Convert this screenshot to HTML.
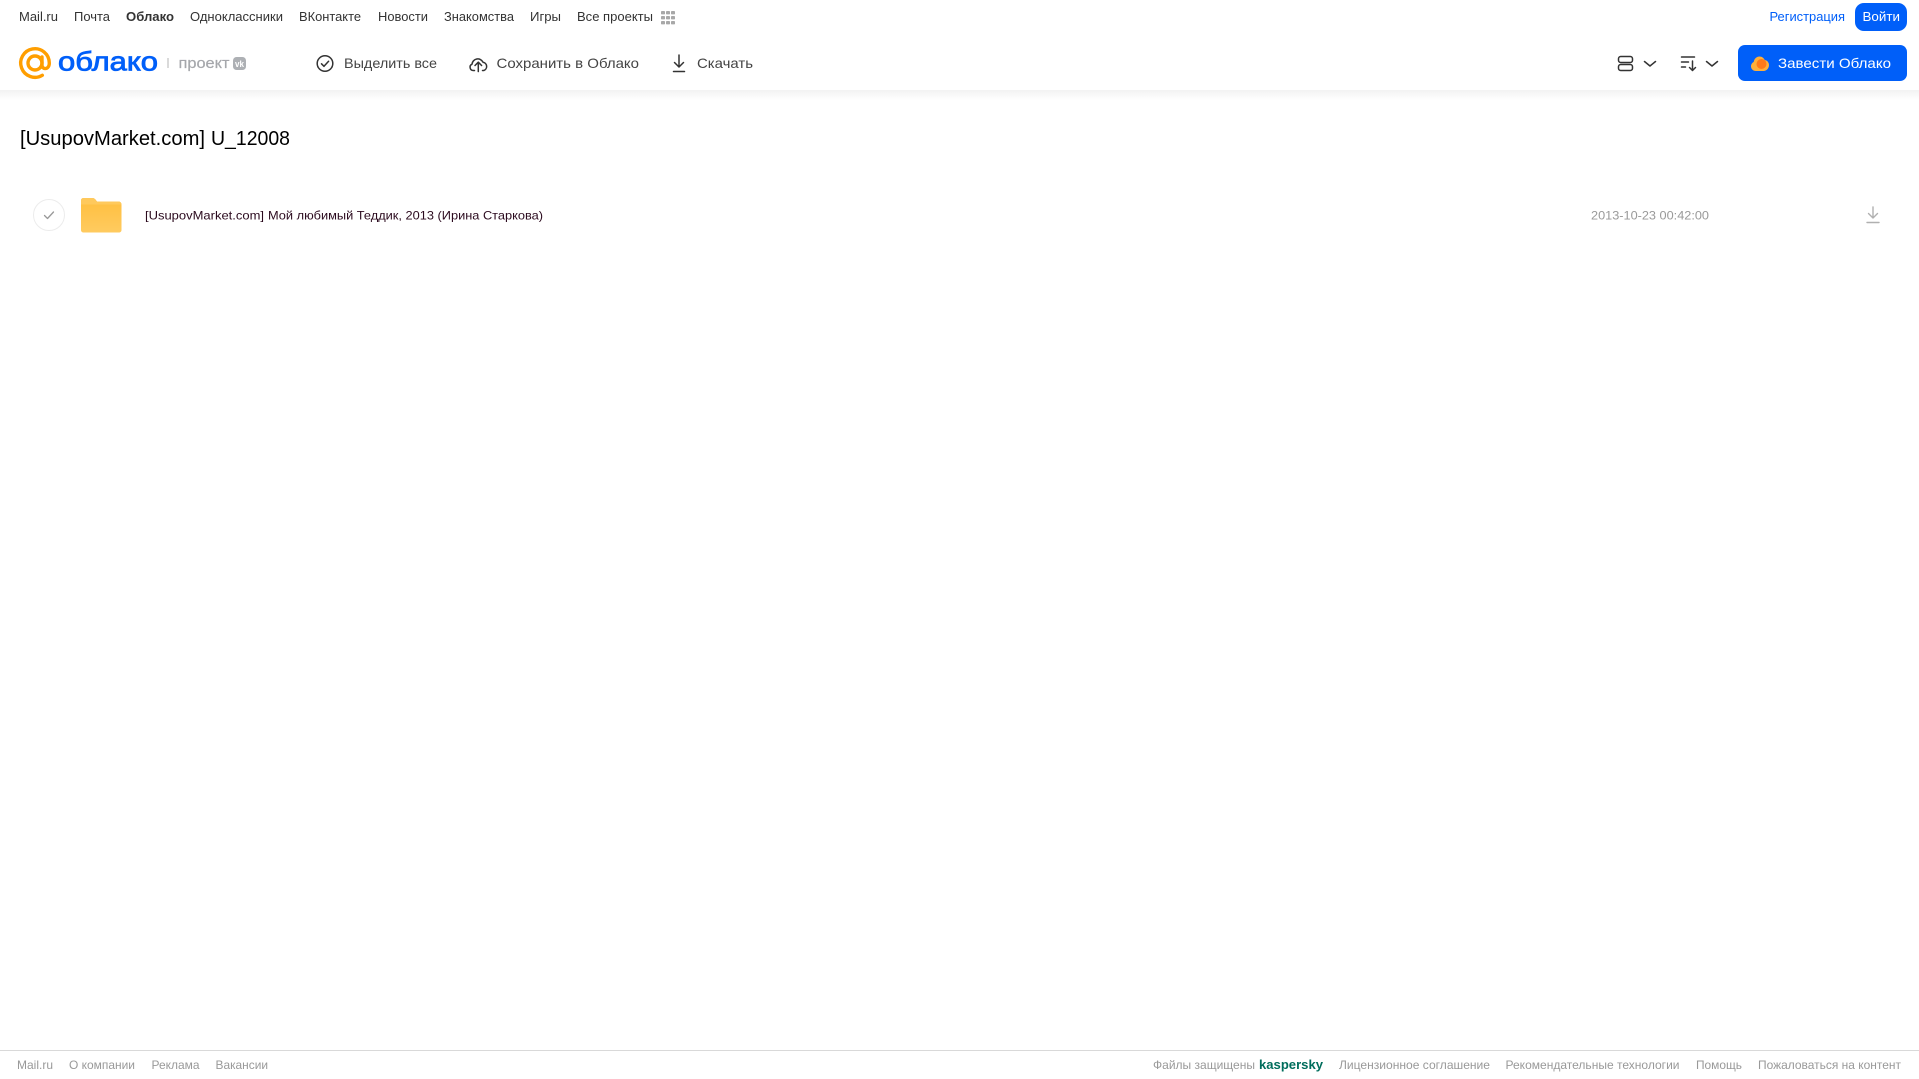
<!DOCTYPE html>
<html lang="ru"><head><meta charset="utf-8"><title>Облако</title>
<style>
html,body{margin:0;padding:0;background:#fff;width:1919px;height:1079px;overflow:hidden}
svg{display:block;position:absolute;left:0;top:0}
text{font-family:"Liberation Sans",Arial,sans-serif}
.n{font-size:13px;fill:#333}
.t{font-size:14px;fill:#444}
.f{font-size:12px;fill:#999}
</style></head><body>
<svg width="1919" height="1079" viewBox="0 0 1919 1079" xmlns="http://www.w3.org/2000/svg">
<defs>
<linearGradient id="sh" x1="0" y1="0" x2="0" y2="1"><stop offset="0" stop-color="#f2f2f2"/><stop offset="1" stop-color="#fff"/></linearGradient>
<linearGradient id="fo" x1="0" y1="0" x2="0" y2="1"><stop offset="0" stop-color="#ffbe3d"/><stop offset="1" stop-color="#ffcb60"/></linearGradient>
</defs>
<rect x="0" y="90" width="1919" height="10" fill="url(#sh)"/>

<text class="n" x="19" y="21" textLength="39" lengthAdjust="spacingAndGlyphs">Mail.ru</text>
<text class="n" x="74" y="21" textLength="36" lengthAdjust="spacingAndGlyphs">Почта</text>
<text class="n" x="126" y="21" textLength="48" lengthAdjust="spacingAndGlyphs" font-weight="bold">Облако</text>
<text class="n" x="190" y="21" textLength="93" lengthAdjust="spacingAndGlyphs">Одноклассники</text>
<text class="n" x="299" y="21" textLength="62" lengthAdjust="spacingAndGlyphs">ВКонтакте</text>
<text class="n" x="378" y="21" textLength="50" lengthAdjust="spacingAndGlyphs">Новости</text>
<text class="n" x="444" y="21" textLength="70" lengthAdjust="spacingAndGlyphs">Знакомства</text>
<text class="n" x="530" y="21" textLength="31" lengthAdjust="spacingAndGlyphs">Игры</text>
<text class="n" x="577" y="21" textLength="76" lengthAdjust="spacingAndGlyphs">Все проекты</text>
<g fill="#a8a8a8">
<rect x="661" y="11" width="4" height="3.4" rx=".8"/><rect x="666" y="11" width="4" height="3.4" rx=".8"/><rect x="671" y="11" width="4" height="3.4" rx=".8"/>
<rect x="661" y="16" width="4" height="3.4" rx=".8"/><rect x="666" y="16" width="4" height="3.4" rx=".8"/><rect x="671" y="16" width="4" height="3.4" rx=".8"/>
<rect x="661" y="21" width="4" height="3.4" rx=".8"/><rect x="666" y="21" width="4" height="3.4" rx=".8"/><rect x="671" y="21" width="4" height="3.4" rx=".8"/>
</g>

<!-- logo -->
<g fill="none" stroke="#ff9e00" stroke-width="3.4" stroke-linecap="round">
<circle cx="35" cy="63" r="7"/>
<path d="M42 57v8c0 5 7.300 5 7.300-2a14.300 14.300 0 1 0-7 12.300"/>
</g>
<text x="58" y="70.500" font-size="26.500" fill="#005ff9" stroke="#005ff9" stroke-width=".8" textLength="100" lengthAdjust="spacingAndGlyphs">облако</text>
<rect x="167.500" y="58" width="1" height="10" fill="#b5b5b5"/>
<text x="178.500" y="68" font-size="15" fill="#a5a7ab" stroke="#a5a7ab" stroke-width=".2" textLength="51" lengthAdjust="spacingAndGlyphs">проект</text>
<rect x="233" y="57" width="13" height="13" rx="3.500" fill="#adb0b4"/>
<text x="235" y="67" font-size="9" font-weight="bold" fill="#fff" textLength="9" lengthAdjust="spacingAndGlyphs">vk</text>

<!-- toolbar -->
<g fill="none" stroke="#333" stroke-width="1.500" stroke-linecap="round" stroke-linejoin="round">
<circle cx="325" cy="63.500" r="7.800"/>
<path d="M321.500 63.800l2.500 2.500 4.600-5"/>
<path d="M474.500 70.500h-1.200a3.300 3.300 0 0 1-1.300-6.300 5.800 5.800 0 0 1 11-2 4.300 4.300 0 0 1 .8 8.300h-1.300"/>
<path d="M478.300 71.500v-9M475 65.500l3.300-3.300 3.300 3.300"/>
<path d="M679 55v12M674.500 62.500l4.500 4.500 4.500-4.500M673.500 71.500h11"/>
</g>
<text class="t" x="344" y="68" textLength="93" lengthAdjust="spacingAndGlyphs">Выделить все</text>
<text class="t" x="496.500" y="68" textLength="142.500" lengthAdjust="spacingAndGlyphs">Сохранить в Облако</text>
<text class="t" x="697" y="68" textLength="56" lengthAdjust="spacingAndGlyphs">Скачать</text>

<!-- right side -->
<text x="1769.500" y="21" font-size="13" fill="#005ff9" textLength="75.500" lengthAdjust="spacingAndGlyphs">Регистрация</text>
<rect x="1855" y="3" width="52" height="28" rx="9" fill="#005ff9"/>
<text x="1862.500" y="21" font-size="13" fill="#fff" textLength="37.500" lengthAdjust="spacingAndGlyphs">Войти</text>

<g fill="none" stroke="#333" stroke-width="1.500" stroke-linecap="round" stroke-linejoin="round">
<rect x="1618.500" y="56.500" width="14" height="6" rx="2.200"/>
<rect x="1618.500" y="64.500" width="14" height="6" rx="2.200"/>
<path d="M1644.500 61.500l5.500 4.500 5.500-4.500"/>
<path d="M1706.500 61.500l5.500 4.500 5.500-4.500"/>
<path d="M1681.500 57h13M1681.500 62h7M1681.500 67h4"/>
<path d="M1692.500 61v9.500M1689.500 67.500l3 3 3-3"/>
</g>

<rect x="1738" y="45" width="169" height="36" rx="7" fill="#005ff9"/>
<path d="M1756 71c-3.200 0-5-2.200-5-4.700 0-2.100 1.300-3.700 2.700-4.300.5-3.300 3-5.500 5.800-5.500 2.400 0 4.300 1.400 5.200 3.500 2.400.3 4.300 2.400 4.300 5 0 3.400-2.500 6-5.500 6z" fill="#ffb03a"/>
<circle cx="1761.500" cy="64" r="5" fill="#ff7a1a"/>
<text x="1778" y="68" font-size="14" fill="#fff" textLength="113" lengthAdjust="spacingAndGlyphs">Завести Облако</text>

<!-- title -->
<text x="20" y="145" font-size="20.500" fill="#000" textLength="185" lengthAdjust="spacingAndGlyphs">[UsupovMarket.com]</text>
<text x="211" y="145" font-size="20.500" fill="#000" textLength="79" lengthAdjust="spacingAndGlyphs">U_12008</text>

<!-- row -->
<circle cx="49" cy="215" r="15.500" fill="#fff" stroke="#ececec" stroke-width="1"/>
<path d="M44.500 215.500l3 3 6-6.500" fill="none" stroke="#999" stroke-width="1.300" stroke-linecap="round" stroke-linejoin="round"/>
<path d="M81 200.500c0-1.700 1.300-2.500 2.500-2.500h9c1.500 0 2.500.8 3.500 2.200l1 1.300h21.500c1.700 0 3 1.300 3 3V230c0 1.700-1.300 2.500-2.500 2.500h-35.500c-1.200 0-2.500-.8-2.500-2.500z" fill="url(#fo)"/>
<path d="M81 200.500c0-1.700 1.300-2.500 2.500-2.500h9c1.500 0 2.500.8 3.500 2.200l1 1.300h21.500c1.700 0 3 1.300 3 3H81z" fill="#ffc95c"/>
<text x="145" y="219.500" font-size="12" fill="#2b0a1e" textLength="119" lengthAdjust="spacingAndGlyphs">[UsupovMarket.com]</text>
<text x="268" y="219.500" font-size="12" fill="#2b0a1e" textLength="275" lengthAdjust="spacingAndGlyphs">Мой любимый Теддик, 2013 (Ирина Старкова)</text>
<text x="1591" y="219.500" font-size="12" fill="#999" textLength="118" lengthAdjust="spacingAndGlyphs">2013-10-23 00:42:00</text>
<path d="M1873 207v11M1868.500 213.500l4.500 4.500 4.500-4.500M1867 222.500h12" fill="none" stroke="#b0b0b0" stroke-width="1.400" stroke-linecap="round" stroke-linejoin="round"/>

<!-- footer -->
<rect x="0" y="1050" width="1919" height="1" fill="#d9d9d9"/>
<text class="f" x="17" y="1069" textLength="36" lengthAdjust="spacingAndGlyphs">Mail.ru</text>
<text class="f" x="69" y="1069" textLength="66" lengthAdjust="spacingAndGlyphs">О компании</text>
<text class="f" x="151.500" y="1069" textLength="48" lengthAdjust="spacingAndGlyphs">Реклама</text>
<text class="f" x="215.500" y="1069" textLength="52.500" lengthAdjust="spacingAndGlyphs">Вакансии</text>
<text class="f" x="1153" y="1069" textLength="102" lengthAdjust="spacingAndGlyphs">Файлы защищены</text>
<text x="1259" y="1069" font-size="13" font-weight="bold" fill="#006d5c" textLength="64" lengthAdjust="spacingAndGlyphs">kaspersky</text>
<text class="f" x="1339" y="1069" textLength="151" lengthAdjust="spacingAndGlyphs">Лицензионное соглашение</text>
<text class="f" x="1505.500" y="1069" textLength="174" lengthAdjust="spacingAndGlyphs">Рекомендательные технологии</text>
<text class="f" x="1696" y="1069" textLength="46" lengthAdjust="spacingAndGlyphs">Помощь</text>
<text class="f" x="1758" y="1069" textLength="143" lengthAdjust="spacingAndGlyphs">Пожаловаться на контент</text>
</svg>
</body></html>
